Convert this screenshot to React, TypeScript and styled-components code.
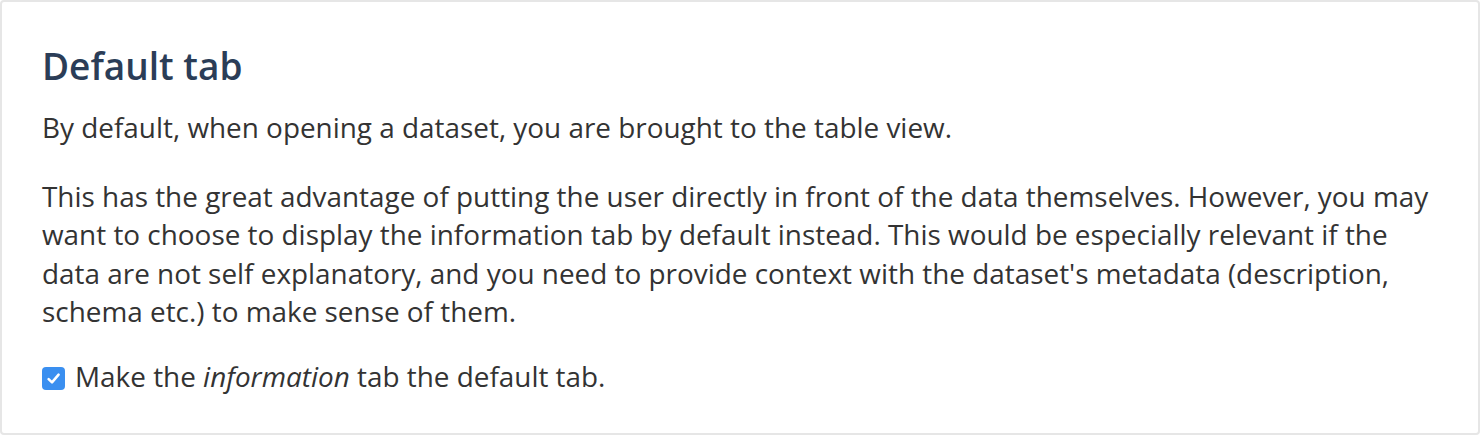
import * as React from "react";
import styled, { createGlobalStyle } from "styled-components";

const GlobalStyle = createGlobalStyle`
  html, body {
    margin: 0;
    padding: 0;
    background: #ffffff;
  }

  body {
    font-family: "Open Sans", "Noto Sans", sans-serif;
    color: #333333;
  }
`;

const Panel = styled.section`
  box-sizing: border-box;
  width: 1480px;
  height: 435px;
  padding: 42px 40px 0 40px;
  border: 2px solid #e6e6e6;
  border-radius: 4px;
  background: #ffffff;
`;

const Title = styled.h2`
  margin: 0 0 20px;
  font-size: 37px;
  line-height: 44px;
  font-weight: 600;
  color: #2b3d57;
`;

const Paragraph = styled.p`
  margin: 0 0 30px;
  font-size: 27.9px;
  line-height: 38.5px;
  color: #333333;
`;

const CheckRow = styled.label`
  display: flex;
  align-items: flex-start;
  gap: 10px;
  margin-top: -4px;
  font-size: 27.9px;
  line-height: 38.5px;
  color: #333333;
  cursor: pointer;
`;

const Box = styled.span<{ $checked: boolean }>`
  display: inline-flex;
  flex: none;
  align-items: center;
  justify-content: center;
  width: 23px;
  height: 23px;
  margin-top: 10px;
  border-radius: 4px;
  background: ${(p) => (p.$checked ? "#3a8ff0" : "#ffffff")};
  border: ${(p) => (p.$checked ? "none" : "1px solid #b5b5b5")};
  box-sizing: border-box;

  svg {
    width: 17px;
    height: 17px;
  }
`;

const HiddenInput = styled.input`
  position: absolute;
  opacity: 0;
  width: 0;
  height: 0;
`;

export default function App() {
  const [checked, setChecked] = React.useState(true);

  return (
    <>
      <GlobalStyle />
      <Panel>
        <Title>Default tab</Title>
        <Paragraph>By default, when opening a dataset, you are brought to the table view.</Paragraph>
        <Paragraph>
          This has the great advantage of putting the user directly in front of the data themselves. However, you may
          want to choose to display the information tab by default instead. This would be especially relevant if the
          data are not self explanatory, and you need to provide context with the dataset's metadata (description,
          schema etc.) to make sense of them.
        </Paragraph>
        <CheckRow>
          <HiddenInput type="checkbox" checked={checked} onChange={() => setChecked(!checked)} />
          <Box $checked={checked}>
            {checked && (
              <svg viewBox="0 0 16 16" fill="none">
                <path d="M3.4 8.6 L6.6 11.6 L12.8 4.4" stroke="#ffffff" strokeWidth="2.4" strokeLinecap="round" strokeLinejoin="round" />
              </svg>
            )}
          </Box>
          <span>
            Make the <em>information</em> tab the default tab.
          </span>
        </CheckRow>
      </Panel>
    </>
  );
}
